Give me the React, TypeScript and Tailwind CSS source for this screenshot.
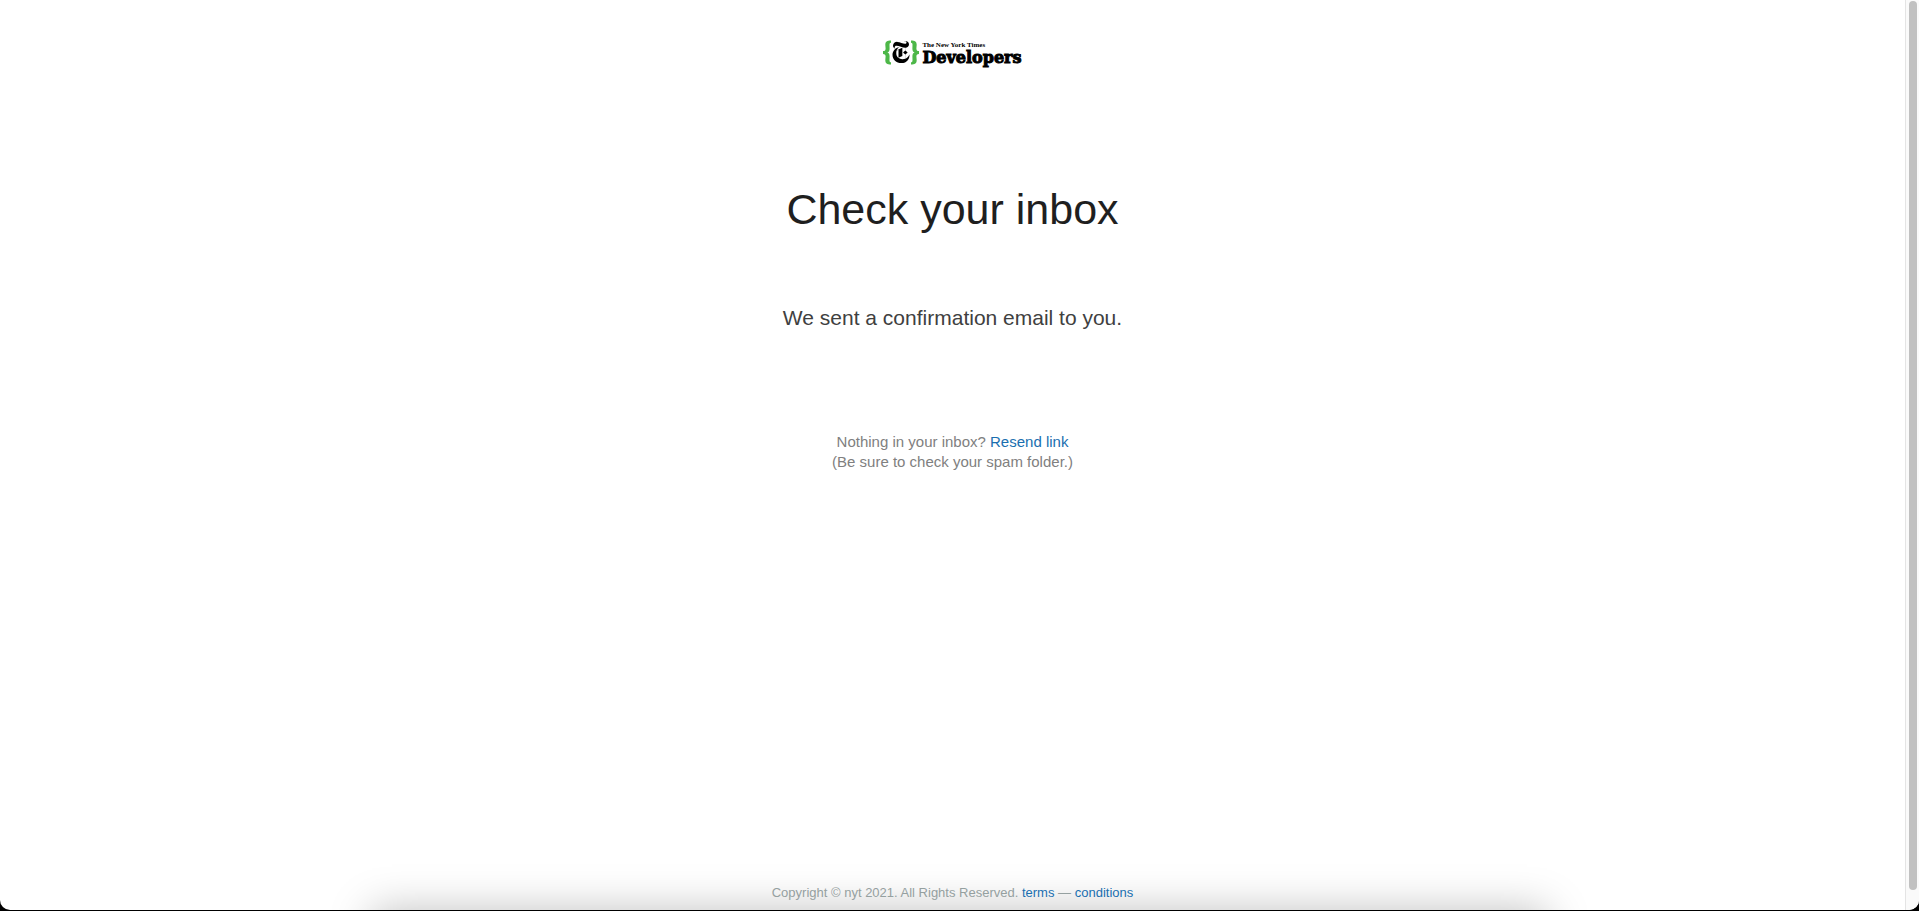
import React from "react";
import { SiNewyorktimes } from "react-icons/si";

function Brace({ flip = false }: { flip?: boolean }) {
  return (
    <svg viewBox="0 0 8 24" className={flip ? "h-[25px] w-2 -scale-x-100" : "h-[25px] w-2"} aria-hidden="true">
      <path
        d="M8 0v2.200C6.900 2.200 6.500 2.900 6.500 4.300c0 1.300.1 2.500.1 3.900 0 2-.6 3.200-2.200 3.800 1.600.6 2.200 1.800 2.200 3.800 0 1.400-.1 2.600-.1 3.900 0 1.400.4 2.100 1.500 2.100V24C4 24 2.300 22.700 2.300 19.700c0-1.300.3-2.400.3-3.700 0-1.700-.6-2.500-2.600-2.600v-2.800C2 10.500 2.600 9.700 2.600 8c0-1.300-.3-2.400-.3-3.700C2.300 1.300 4 0 8 0z"
        fill="#4db748"
      />
    </svg>
  );
}

function Logo() {
  return (
    <a href="#home" aria-label="The New York Times Developers" className="flex items-center text-black">
      <Brace />
      <SiNewyorktimes className="-mx-px size-[22px]" aria-hidden="true" />
      <Brace flip />
      <span className="ml-[3px] flex flex-col pt-0.5 text-left">
        <span className="font-['Liberation_Serif',serif] text-[7px] leading-[10px] font-bold whitespace-nowrap">
          The New York Times
        </span>
        <span className="font-['DejaVu_Serif',serif] text-[16px] leading-4 font-bold [-webkit-text-stroke:1px_black]">
          Developers
        </span>
      </span>
    </a>
  );
}

export default function App() {
  return (
    <div className="flex h-screen flex-col bg-black pb-px font-['Liberation_Sans',Arial,sans-serif]">
      <div className="relative flex flex-1 overflow-hidden rounded-b-[10px] bg-white">
        <div className="flex flex-1 flex-col items-center text-center">
          <header className="pt-[38px]">
            <Logo />
          </header>
          <main className="flex flex-1 flex-col items-center pt-[118px]">
            <h1 className="text-[43px] leading-[50px] text-[#1f1f1f]">Check your inbox</h1>
            <p className="mt-[72px] text-[21px] leading-6 text-[#404040]">We sent a confirmation email to you.</p>
            <p className="mt-[102px] text-[15px] leading-5 text-[#808080]">
              Nothing in your inbox?{" "}
              <a href="#resend" className="text-[#1a6fb0]">
                Resend link
              </a>
              <br />
              (Be sure to check your spam folder.)
            </p>
          </main>
          <footer className="relative z-10 pb-[9px] text-[13px] leading-4 text-[#95a0a0]">
            Copyright © nyt 2021. All Rights Reserved.{" "}
            <a href="#terms" className="text-[#1a6fb0]">
              terms
            </a>{" "}
            —{" "}
            <a href="#conditions" className="text-[#1a6fb0]">
              conditions
            </a>
          </footer>
        </div>
        <div className="flex w-3.5 justify-center border-l border-[#e4e4e4] bg-[#fafafa] pt-px pb-5" aria-hidden="true">
          <div className="w-2 rounded-full bg-[#c1c1c1]" />
        </div>
        <div
          className="absolute inset-x-[372px] top-full h-40 shadow-[0_0_40px_rgba(0,0,0,0.25)]"
          aria-hidden="true"
        />
      </div>
    </div>
  );
}
